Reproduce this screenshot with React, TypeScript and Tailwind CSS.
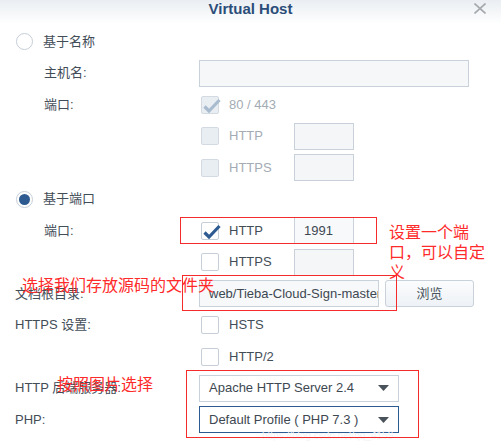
import React from "react";

const FONT = { fontFamily: '"Liberation Sans", "Noto Sans CJK SC", Arial, sans-serif' };
const RED_FONT = { fontFamily: '"Noto Sans CJK SC", "Liberation Sans", sans-serif' };

function Radio({ checked }: { checked?: boolean }) {
  return (
    <div className="w-[17px] h-[17px] rounded-full border border-[#c6ced7] bg-white flex items-center justify-center shrink-0">
      {checked && <div className="w-[11px] h-[11px] rounded-full bg-[#2d5b91]" />}
    </div>
  );
}

function Check({ checked, disabled }: { checked?: boolean; disabled?: boolean }) {
  return (
    <div
      className={
        "relative w-[18px] h-[18px] rounded-[2px] border shrink-0 ml-[2px] " +
        (disabled ? "bg-[#e9eef3] border-[#d3dae2]" : "bg-white border-[#c6ced7]")
      }
    >
      {checked && (
        <svg className="absolute left-[1px] top-[1px] overflow-visible" width="18" height="16" viewBox="0 0 18 16">
          <path
            d="M1.5 8.5 L6 13 L16.5 2"
            fill="none"
            stroke={disabled ? "#a9bbcf" : "#2d5b91"}
            strokeWidth="3.2"
            strokeLinecap="butt"
            strokeLinejoin="miter"
          />
        </svg>
      )}
    </div>
  );
}

function Row({ children, label, indent }: { children?: React.ReactNode; label?: React.ReactNode; indent?: "sub" | "main" }) {
  return (
    <div className="flex items-center h-[27px] shrink-0">
      <div className={"w-[199px] shrink-0 text-[13px] text-[#434d58] " + (indent === "sub" ? "pl-[44px]" : "pl-[15px]")}>
        {label}
      </div>
      <div className="flex items-center h-full">{children}</div>
    </div>
  );
}

function CheckItem({ text, checked, disabled, port, portValue, portDisabled }: { text: string; checked?: boolean; disabled?: boolean; port?: boolean; portValue?: string; portDisabled?: boolean }) {
  return (
    <div className="flex items-center h-full">
      <Check checked={checked} disabled={disabled} />
      <span className={"ml-[10px] w-[65px] text-[13px] " + (disabled ? "text-[#a3abb4]" : "text-[#434d58]")}>{text}</span>
      {port && (
        <div
          className={
            "w-[60px] h-[27px] border border-[#c9d1da] flex items-center pl-[9px] text-[13px] text-[#3e4852] " +
            (portDisabled ? "bg-[#f4f6f8]" : "bg-[#f8f9fb]")
          }
        >
          {portValue}
        </div>
      )}
    </div>
  );
}

function Select({ text, focus }: { text: string; focus?: boolean }) {
  return (
    <div
      className={
        "w-[200px] h-[27px] border bg-white flex items-center justify-between pl-[9px] pr-[9px] text-[13px] text-[#3e4852] " +
        (focus ? "border-[#2d5b91]" : "border-[#c9d1da]")
      }
    >
      <span>{text}</span>
      <svg width="11" height="6" viewBox="0 0 11 6">
        <path d="M0 0 H11 L5.5 6 Z" fill="#4a525c" />
      </svg>
    </div>
  );
}

export default function App() {
  return (
    <div className="relative w-[501px] h-[446px] overflow-hidden bg-white" style={FONT}>
      {/* header */}
      <div className="relative h-[24px] bg-gradient-to-b from-[#eaeef2] to-white flex justify-center">
        <span className="text-[15px] leading-[17px] font-bold text-[#2b4d79]">Virtual Host</span>
        <svg className="absolute left-[474px] top-[3px]" width="12" height="11" viewBox="0 0 12 11">
          <path d="M0.5 0.5 L11.5 10.5 M11.5 0.5 L0.5 10.5" stroke="#a4a8ad" strokeWidth="1.6" />
        </svg>
      </div>

      {/* body */}
      <div className="flex flex-col gap-[4.5px] pt-[4px]">
        <div className="flex items-center h-[27px] pl-[16px] shrink-0">
          <Radio />
          <span className="ml-[10px] text-[13px] text-[#434d58]">基于名称</span>
        </div>
        <Row label="主机名:" indent="sub">
          <div className="w-[270px] h-[27px] border border-[#c9d1da] bg-[#f5f7f9]" />
        </Row>
        <Row label="端口:" indent="sub">
          <CheckItem text="80 / 443" checked disabled />
        </Row>
        <Row>
          <CheckItem text="HTTP" disabled port portDisabled />
        </Row>
        <Row>
          <CheckItem text="HTTPS" disabled port portDisabled />
        </Row>
        <div className="flex items-center h-[27px] pl-[16px] shrink-0">
          <Radio checked />
          <span className="ml-[10px] text-[13px] text-[#434d58]">基于端口</span>
        </div>
        <Row label="端口:" indent="sub">
          <CheckItem text="HTTP" checked port portValue="1991" />
        </Row>
        <Row>
          <CheckItem text="HTTPS" port portDisabled />
        </Row>
        <Row label="文档根目录:">
          <div className="w-[180px] h-[27px] border border-[#c9d1da] bg-[#f6f8fa] flex items-center pl-[9px] overflow-hidden whitespace-nowrap text-[13px] text-[#3e4852]">
            web/Tieba-Cloud-Sign-master
          </div>
          <div className="ml-[6px] w-[89px] h-[27px] rounded-[3px] border border-[#c9d1da] bg-gradient-to-b from-[#fbfcfd] to-[#eef2f6] flex items-center justify-center text-[13px] text-[#4a5560]">
            浏览
          </div>
        </Row>
        <Row label="HTTPS 设置:">
          <CheckItem text="HSTS" />
        </Row>
        <Row>
          <CheckItem text="HTTP/2" />
        </Row>
        <Row label="HTTP 后端服务器:">
          <Select text="Apache HTTP Server 2.4" />
        </Row>
        <Row label="PHP:">
          <Select text="Default Profile ( PHP 7.3 )" focus />
        </Row>
      </div>

      {/* faint watermark */}
      <div className="absolute left-[262px] top-[428px] text-[10px] text-[#f3f4f6] whitespace-nowrap">
        https://blog.csdn.net/qq_4159
      </div>

      {/* annotations */}
      <div className="absolute left-[180px] top-[217px] w-[197px] h-[27px] border border-[#f52a2a]" />
      <div className="absolute left-[182px] top-[275px] w-[215px] h-[36px] border border-[#f52a2a]" />
      <div className="absolute left-[186px] top-[370px] w-[233px] h-[68px] border border-[#f52a2a]" />

      <div className="absolute left-[389px] top-[221px] text-[16px] leading-[20px] text-[#ff2b2b]" style={RED_FONT}>
        <div>设置一个端</div>
        <div>口，可以自定</div>
        <div>义</div>
      </div>
      <div className="absolute left-[22px] top-[274px] text-[16px] leading-[20px] text-[#ff2b2b] whitespace-nowrap" style={RED_FONT}>
        选择我们存放源码的文件夹
      </div>
      <div className="absolute left-[57px] top-[373px] text-[16px] leading-[20px] text-[#ff2b2b] whitespace-nowrap" style={RED_FONT}>
        按照图片选择
      </div>
    </div>
  );
}
